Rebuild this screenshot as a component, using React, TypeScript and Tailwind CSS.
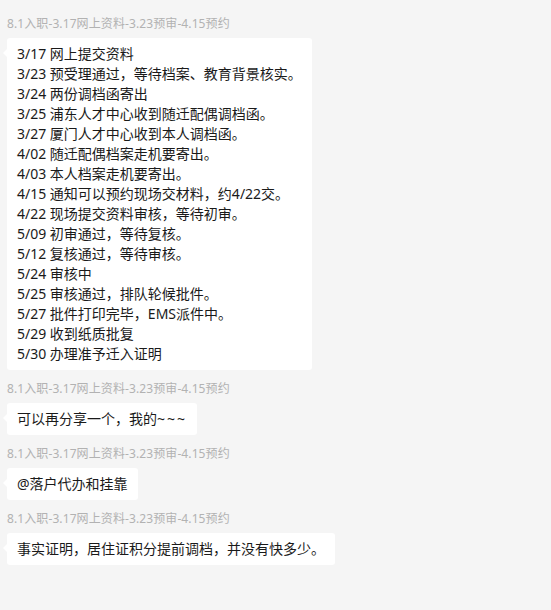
import React from "react";

const label = "8.1入职-3.17网上资料-3.23预审-4.15预约";

const lines = [
  "3/17 网上提交资料",
  "3/23 预受理通过，等待档案、教育背景核实。",
  "3/24 两份调档函寄出",
  "3/25 浦东人才中心收到随迁配偶调档函。",
  "3/27 厦门人才中心收到本人调档函。",
  "4/02 随迁配偶档案走机要寄出。",
  "4/03 本人档案走机要寄出。",
  "4/15 通知可以预约现场交材料，约4/22交。",
  "4/22 现场提交资料审核，等待初审。",
  "5/09 初审通过，等待复核。",
  "5/12 复核通过，等待审核。",
  "5/24 审核中",
  "5/25 审核通过，排队轮候批件。",
  "5/27 批件打印完毕，EMS派件中。",
  "5/29 收到纸质批复",
  "5/30 办理准予迁入证明",
];

function Message({ children }: { children: React.ReactNode }) {
  return (
    <div className="flex flex-col items-start">
      <div className="text-[12px] leading-[17px] text-[#b2b2b2] mb-[6px] whitespace-nowrap tracking-[0.1px]">{label}</div>
      <div className="relative bg-white rounded-[3px] px-[10px] py-[6px] text-[14px] leading-[20px] text-[#1a1a1a]">
        <span className="absolute left-[-4px] top-[11px] w-0 h-0 border-t-[4px] border-b-[4px] border-r-[4px] border-t-transparent border-b-transparent border-r-white" />
        {children}
      </div>
    </div>
  );
}

export default function App() {
  return (
    <div
      className="w-[551px] h-[610px] bg-[#f5f5f5] pl-[7px] pt-[15px] flex flex-col gap-[10px] overflow-hidden"
      style={{ fontFamily: '"Noto Sans", "Noto Sans CJK SC", sans-serif' }}
    >
      <Message>
        {lines.map((l) => (
          <div key={l} className="whitespace-nowrap">{l}</div>
        ))}
      </Message>
      <Message>
        <div className="whitespace-nowrap">
          可以再分享一个，我的<span className="tracking-[2px]">~~~</span>
        </div>
      </Message>
      <Message>
        <div className="whitespace-nowrap">@落户代办和挂靠</div>
      </Message>
      <Message>
        <div className="whitespace-nowrap">事实证明，居住证积分提前调档，并没有快多少。</div>
      </Message>
    </div>
  );
}
